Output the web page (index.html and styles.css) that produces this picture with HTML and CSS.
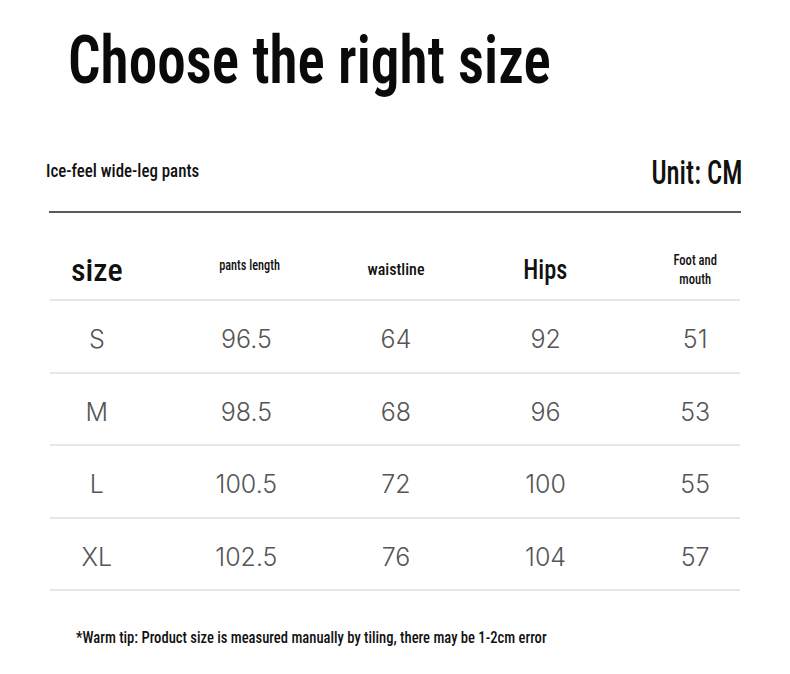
FILE: index.html
```html
<!DOCTYPE html>
<html>
<head>
<meta charset="utf-8">
<link rel="stylesheet" href="styles.css">
</head>
<body>
<div class="page">
  <h1 class="title"><span class="sq title-text">Choose the right size</span></h1>
  <div class="sub">
    <span class="sq product">Ice-feel wide-leg pants</span>
    <span class="sq unit">Unit: CM</span>
  </div>
  <div class="rule"></div>
  <div class="table">
    <div class="row head">
      <div class="cell h-size"><span class="sq">size</span></div>
      <div class="cell h-small h-len"><span class="sq">pants length</span></div>
      <div class="cell h-mid"><span class="sq">waistline</span></div>
      <div class="cell h-hips"><span class="sq">Hips</span></div>
      <div class="cell h-small two"><span class="sq">Foot and<br>mouth</span></div>
    </div>
    <div class="row"><div class="cell">S</div><div class="cell">96.5</div><div class="cell">64</div><div class="cell">92</div><div class="cell">51</div></div>
    <div class="row"><div class="cell">M</div><div class="cell">98.5</div><div class="cell">68</div><div class="cell">96</div><div class="cell">53</div></div>
    <div class="row"><div class="cell">L</div><div class="cell">100.5</div><div class="cell">72</div><div class="cell">100</div><div class="cell">55</div></div>
    <div class="row"><div class="cell">XL</div><div class="cell">102.5</div><div class="cell">76</div><div class="cell">104</div><div class="cell">57</div></div>
  </div>
  <p class="tip"><span class="sq tip-text">*Warm tip: Product size is measured manually by tiling, there may be 1-2cm error</span></p>
</div>
</body>
</html>
```
FILE: styles.css
```css
html, body {
  margin: 0;
  padding: 0;
  background: #fff;
}
.page {
  width: 790px;
  height: 674px;
  overflow: hidden;
  font-family: "Roboto", "Liberation Sans", sans-serif;
  font-stretch: condensed;
  color: #111;
}
.sq {
  display: inline-block;
  white-space: nowrap;
}
.title {
  margin: 0;
  padding: 28px 0 0 68px;
  font-size: 66px;
  line-height: 66px;
  font-weight: 600;
  color: #0a0a0a;
}
.title-text {
  transform: scaleX(0.867);
  transform-origin: left center;
}
.sub {
  display: flex;
  justify-content: space-between;
  align-items: flex-start;
  margin-top: 62px;
  padding: 0 47px 0 46px;
  height: 40px;
}
.product {
  margin-top: 5px;
  font-size: 18px;
  line-height: 20px;
  font-weight: 500;
  transform: scaleX(0.94);
  transform-origin: left center;
}
.unit {
  font-size: 33px;
  line-height: 34px;
  font-weight: 500;
  transform: scaleX(0.81);
  transform-origin: right center;
}
.rule {
  margin: 15px 0 0 49px;
  width: 692px;
  height: 2px;
  background: #5a5a5a;
}
.table {
  margin-left: 22px;
  width: 748px;
}
.row {
  display: grid;
  grid-template-columns: repeat(5, 1fr);
  align-items: center;
  height: 68.5px;
  padding-top: 4px;
  background: linear-gradient(#e6e6e6, #e6e6e6) no-repeat 28px 100% / 690px 2px;
  font-family: "Inter", "Noto Sans", sans-serif;
  font-stretch: normal;
  font-weight: 300;
  font-size: 25px;
  color: #555;
}
.row.head {
  height: 63px;
  padding-top: 25px;
  font-family: "Roboto", "Liberation Sans", sans-serif;
  font-stretch: condensed;
  font-weight: 500;
  color: #111;
}
.cell {
  text-align: center;
}
.h-size { font-size: 32px; }
.h-hips { font-size: 28px; }
.h-hips .sq { transform: scaleX(0.87); }
.h-mid { font-size: 16px; }
.h-small { font-size: 14px; }
.h-len { margin: 0 0 10px 7px; }
.h-len .sq { transform: scaleX(0.88); }
.h-small.two { line-height: 19px; }
.h-small.two .sq { transform: scaleX(0.9); }
.tip {
  margin: 36px 0 0 76px;
  font-size: 17px;
  font-weight: 500;
  color: #111;
}
.tip-text {
  transform: scaleX(0.86);
  transform-origin: left center;
}
```
